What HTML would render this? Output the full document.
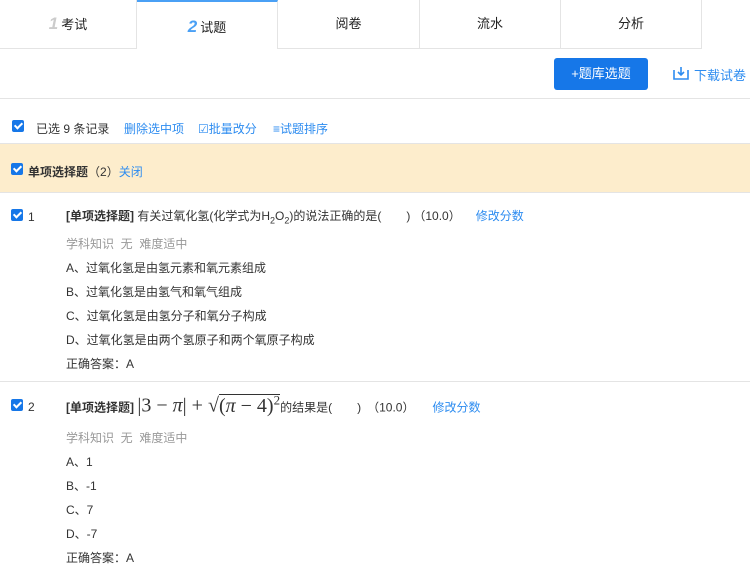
<!DOCTYPE html>
<html><head><meta charset="utf-8"><style>
*{margin:0;padding:0;box-sizing:border-box}
body{width:750px;height:570px;overflow:hidden;background:#fff;font-family:"Liberation Sans","Noto Sans CJK SC",sans-serif;font-size:12px;color:#333}
.tabs{position:absolute;top:0;left:0;height:49px;width:750px}
.tab{position:absolute;top:0;height:49px;border-right:1px solid #e4e4e4;border-bottom:1px solid #e4e4e4;text-align:center;line-height:48px;font-size:13px;color:#222}
.tab.act{border-top:2px solid #4aa0f5;border-bottom:none;background:#fff;line-height:50px}
.num{font-style:italic;font-weight:bold;font-size:17px;margin-right:3px}
.abs{position:absolute;white-space:nowrap}
.blue{color:#2d8cf0}
.cb{position:absolute;width:12px;height:12px;background:#1677e8;border-radius:2px}
.cb:after{content:"";position:absolute;left:3.5px;top:1px;width:3px;height:6px;border:solid #fff;border-width:0 2px 2px 0;transform:rotate(45deg)}
.gray{color:#999}
b{font-weight:bold}
</style></head><body>
<div class="tabs">
<div class="tab" style="left:0;width:137px"><span class="num" style="color:#ccc">1</span>考试</div>
<div class="tab act" style="left:137px;width:141px"><span class="num" style="color:#4aa0f5">2</span>试题</div>
<div class="tab" style="left:278px;width:142px">阅卷</div>
<div class="tab" style="left:420px;width:141px">流水</div>
<div class="tab" style="left:561px;width:141px">分析</div>
</div>
<div class="abs" style="left:554px;top:58px;width:94px;height:32px;background:#1677e8;border-radius:3px;color:#fff;font-size:13px;line-height:32px;text-align:center">+题库选题</div>
<svg class="abs" style="left:673px;top:66px" width="16" height="14" viewBox="0 0 16 14"><path d="M1 4v9h14V4M8 1v8M5 6l3 3 3-3" fill="none" stroke="#2d8cf0" stroke-width="1.6"/></svg>
<div class="abs blue" style="left:694px;top:65px;font-size:13px">下载试卷</div>
<div class="abs" style="left:0;top:98px;width:750px;height:1px;background:#e4e4e4"></div>
<div class="cb" style="left:12px;top:120px"></div>
<div class="abs" style="left:36px;top:120px">已选 9 条记录</div>
<div class="abs blue" style="left:124px;top:120px">删除选中项</div>
<div class="abs blue" style="left:198px;top:120px">☑批量改分</div>
<div class="abs blue" style="left:273px;top:120px">≡试题排序</div>
<div class="abs" style="left:0;top:143px;width:750px;height:50px;background:#fdedcc;border-top:1px solid #e4e4e4;border-bottom:1px solid #e4e4e4"></div>
<div class="cb" style="left:11px;top:163px"></div>
<div class="abs" style="left:28px;top:163px"><b>单项选择题</b>（2）<span class="blue">关闭</span></div>
<div class="cb" style="left:11px;top:209px"></div>
<div class="abs" style="left:28px;top:210px">1</div>
<div class="abs" style="left:66px;top:207px"><b>[单项选择题]</b> 有关过氧化氢(化学式为H<sub style="font-size:9px">2</sub>O<sub style="font-size:9px">2</sub>)的说法正确的是(<span style="display:inline-block;width:25px"></span>)<span style="display:inline-block;width:3px"></span>（10.0）<span style="display:inline-block;width:15px"></span><span class="blue">修改分数</span></div>
<div class="abs gray" style="left:66px;top:235px">学科知识 &nbsp;无 &nbsp;难度适中</div>
<div class="abs" style="left:66px;top:259px">A、过氧化氢是由氢元素和氧元素组成</div>
<div class="abs" style="left:66px;top:283px">B、过氧化氢是由氢气和氧气组成</div>
<div class="abs" style="left:66px;top:307px">C、过氧化氢是由氢分子和氧分子构成</div>
<div class="abs" style="left:66px;top:331px">D、过氧化氢是由两个氢原子和两个氧原子构成</div>
<div class="abs" style="left:66px;top:355px">正确答案：A</div>
<div class="abs" style="left:0;top:381px;width:750px;height:1px;background:#e4e4e4"></div>
<div class="cb" style="left:11px;top:399px"></div>
<div class="abs" style="left:28px;top:400px">2</div>
<div class="abs" style="left:66px;top:392px"><b>[单项选择题]</b> <span style="font-family:'Liberation Serif',serif;font-size:20px">|3 − <i>π</i>| + √<span style="border-top:1px solid #333">(<i>π</i> − 4)<sup style="font-size:13px">2</sup></span></span>的结果是(<span style="display:inline-block;width:25px"></span>)<span style="display:inline-block;width:6px"></span>（10.0）<span style="display:inline-block;width:18px"></span><span class="blue">修改分数</span></div>
<div class="abs gray" style="left:66px;top:429px">学科知识 &nbsp;无 &nbsp;难度适中</div>
<div class="abs" style="left:66px;top:453px">A、1</div>
<div class="abs" style="left:66px;top:477px">B、-1</div>
<div class="abs" style="left:66px;top:501px">C、7</div>
<div class="abs" style="left:66px;top:525px">D、-7</div>
<div class="abs" style="left:66px;top:549px">正确答案：A</div>
</body></html>
